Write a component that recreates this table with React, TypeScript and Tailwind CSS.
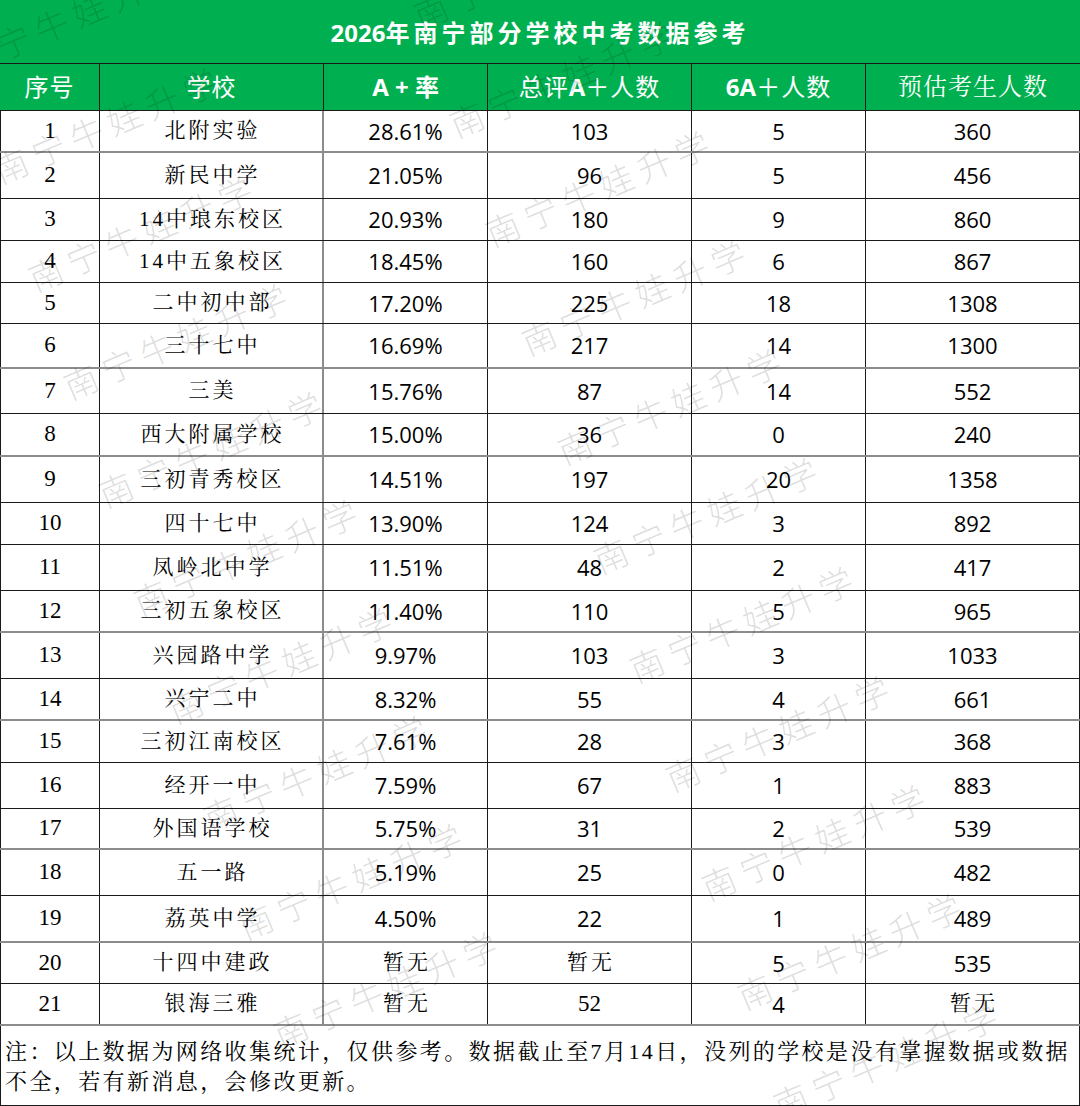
import React from "react";

const NUM = "font-['Open_Sans','Noto_Sans_CJK_SC',sans-serif]";
const SERIF = "font-['Liberation_Serif','Noto_Serif_CJK_SC','Noto_Sans_CJK_SC',serif]";
const SANS = "font-['Open_Sans','Noto_Sans_CJK_SC',sans-serif]";

type Row = { c: string[]; h: string; gray: boolean };

const H: Record<number, string> = {
  41: "h-[41px]",
  42: "h-[42px]",
  43: "h-[43px]",
  45: "h-[45px]",
  46: "h-[46px]",
  47: "h-[47px]",
};

const data: [string[], number, boolean][] = [
  [["1", "北附实验", "28.61%", "103", "5", "360"], 42, true],
  [["2", "新民中学", "21.05%", "96", "5", "456"], 46, false],
  [["3", "14中琅东校区", "20.93%", "180", "9", "860"], 42, false],
  [["4", "14中五象校区", "18.45%", "160", "6", "867"], 42, false],
  [["5", "二中初中部", "17.20%", "225", "18", "1308"], 41, false],
  [["6", "三十七中", "16.69%", "217", "14", "1300"], 45, true],
  [["7", "三美", "15.76%", "87", "14", "552"], 45, false],
  [["8", "西大附属学校", "15.00%", "36", "0", "240"], 43, true],
  [["9", "三初青秀校区", "14.51%", "197", "20", "1358"], 46, false],
  [["10", "四十七中", "13.90%", "124", "3", "892"], 42, false],
  [["11", "凤岭北中学", "11.51%", "48", "2", "417"], 46, false],
  [["12", "三初五象校区", "11.40%", "110", "5", "965"], 42, true],
  [["13", "兴园路中学", "9.97%", "103", "3", "1033"], 46, false],
  [["14", "兴宁二中", "8.32%", "55", "4", "661"], 42, true],
  [["15", "三初江南校区", "7.61%", "28", "3", "368"], 42, false],
  [["16", "经开一中", "7.59%", "67", "1", "883"], 46, false],
  [["17", "外国语学校", "5.75%", "31", "2", "539"], 41, true],
  [["18", "五一路", "5.19%", "25", "0", "482"], 46, false],
  [["19", "荔英中学", "4.50%", "22", "1", "489"], 47, true],
  [["20", "十四中建政", "暂无", "暂无", "5", "535"], 41, false],
  [["21", "银海三雅", "暂无", "52", "4", "暂无"], 42, true],
];

const rows: Row[] = data.map(([c, h, g]) => ({ c, h: H[h], gray: g }));

function cellText(v: string, col: number, row: number) {
  if (col === 0 || (row === 20 && col === 3 && v === "52")) {
    return <span className={`${SERIF} text-[23px] text-black`}>{v}</span>;
  }
  if (col === 1 || v === "暂无") {
    return (
      <span className={`${SERIF} text-[21px] tracking-[3px] pl-[3px] text-black`}>{v}</span>
    );
  }
  return <span className={`${NUM} text-[22px] text-black`}>{v}</span>;
}

const colBorder = [
  "border-l border-l-[#1a1a1a] border-r border-r-[#1a1a1a]",
  "border-r-2 border-r-[#8c8c8c]",
  "border-r border-r-[#1a1a1a]",
  "border-r border-r-[#1a1a1a]",
  "border-r border-r-[#1a1a1a]",
  "border-r border-r-[#1a1a1a]",
];

const GRID = "grid grid-cols-[100px_224px_164px_204px_174px_214px]";

function Watermarks() {
  const marks: { x: number; y: number }[] = [];
  for (let i = 0; i < 10; i++) marks.push({ x: -25 + 35 * i + 95, y: 57 + 108 * i - 40 });
  for (let i = 0; i < 11; i++) marks.push({ x: 430 + 36 * i + 95, y: 10 + 109 * i - 40 });
  return (
    <div className="pointer-events-none absolute inset-0 overflow-hidden">
      {marks.map((m, i) => (
        <span
          key={i}
          className="absolute -translate-x-1/2 -translate-y-1/2 -rotate-[23deg] whitespace-nowrap pl-[7px] font-['Noto_Sans_CJK_SC',sans-serif] text-[34px] font-light leading-none tracking-[7px] text-black/[0.14]"
          style={{ left: m.x, top: m.y }}
        >
          南宁牛娃升学
        </span>
      ))}
    </div>
  );
}

export default function App() {
  return (
    <div className="relative h-[1106px] w-[1080px] overflow-hidden bg-white">
      {/* Title */}
      <div className="flex h-[64px] items-center justify-center border-b border-b-[#1a1a1a] bg-[#00b050] pt-[3px]">
        <span className={`${SANS} text-[24px] font-bold text-white`}>
          2026<span className="tracking-[4px]">年南宁部分学校中考数据参考</span>
        </span>
      </div>

      {/* Header */}
      <div className={`${GRID} h-[47px] border-b border-b-[#1a1a1a] bg-[#00b050] text-white`}>
        {[
          <span className="tracking-[1px]">序号</span>,
          <span className="tracking-[1px]">学校</span>,
          <span className={`${NUM} font-bold`}>A + 率</span>,
          <span className="tracking-[1px]">
            总评<span className={`${NUM} font-bold tracking-normal`}>A</span>＋人数
          </span>,
          <span className="tracking-[1px]">
            <span className={`${NUM} font-bold tracking-normal`}>6A</span>＋人数
          </span>,
          <span className={`${SERIF} tracking-[1px]`}>预估考生人数</span>,
        ].map((el, i) => (
          <div
            key={i}
            className={`flex items-center justify-center ${SANS} text-[24px] ${
              i === 5 ? "" : "border-r border-r-[#1a1a1a]"
            }`}
          >
            {el}
          </div>
        ))}
      </div>

      {/* Body */}
      {rows.map((r, ri) => (
        <div
          key={ri}
          className={`${GRID} ${r.h} ${
            r.gray ? "border-b-2 border-b-[#8c8c8c]" : "border-b border-b-[#1a1a1a]"
          }`}
        >
          {r.c.map((v, ci) => (
            <div key={ci} className={`flex items-center justify-center ${colBorder[ci]}`}>
              {cellText(v, ci, ri)}
            </div>
          ))}
        </div>
      ))}

      {/* Footer */}
      <div className="h-[80px] border-x border-b border-[#1a1a1a] pl-[4px] pt-[11px]">
        <p className={`${SERIF} whitespace-nowrap text-[22px] leading-[30px] tracking-[2.4px] text-black`}>
          注：以上数据为网络收集统计，仅供参考。数据截止至7月14日，没列的学校是没有掌握数据或数据
          <br />
          不全，若有新消息，会修改更新。
        </p>
      </div>

      <Watermarks />
    </div>
  );
}
